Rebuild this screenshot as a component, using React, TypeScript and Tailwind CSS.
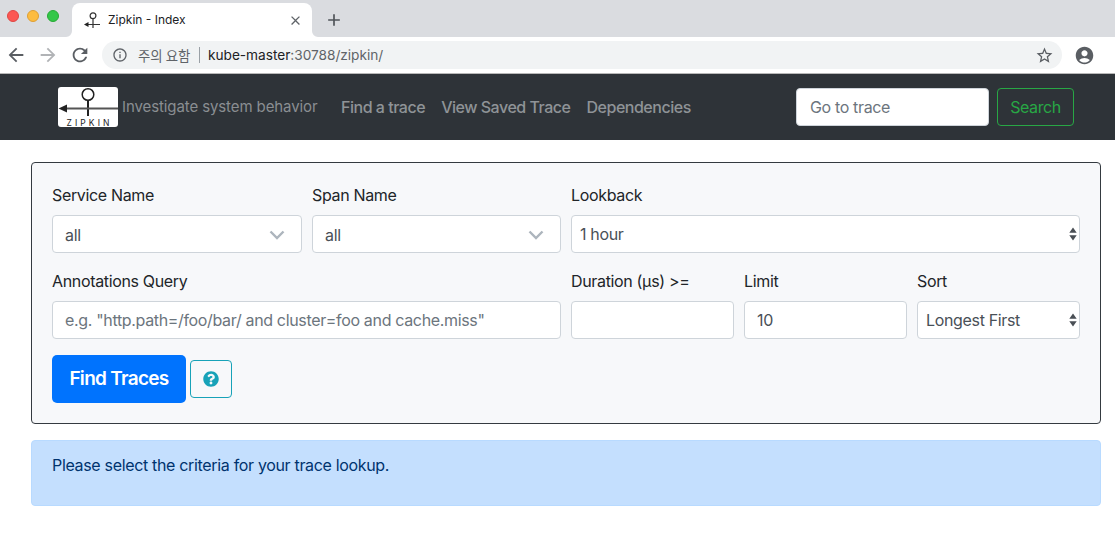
import { FaQuestionCircle } from 'react-icons/fa'
import { MdAccountCircle, MdArrowBack, MdArrowForward, MdClose, MdInfoOutline, MdRefresh, MdStarBorder, MdAdd } from 'react-icons/md'

const labelCls = 'block h-[24px] text-[16px] leading-[24px] text-[#212529] mb-[8px]'
const inputCls =
  'block w-full h-[38px] rounded-[4px] border border-[#ced4da] bg-white px-[12px] text-[16px] tracking-[-0.34px] text-[#495057] outline-none placeholder:text-[#6c757d]'

function Pin({ small }: { small?: boolean }) {
  if (small) {
    return (
      <svg width="17" height="17" viewBox="0 0 17 17" className="shrink-0">
        <circle cx="10" cy="3.8" r="2.9" fill="none" stroke="#333" strokeWidth="1.2" />
        <path d="M10 6.7V16M4 12.5h13" stroke="#333" strokeWidth="1.2" />
        <path d="M1 12.5l4.5-2.6v5.2z" fill="#222" />
      </svg>
    )
  }
  return (
    <svg width="60" height="40" viewBox="0 0 60 40" className="shrink-0 rounded-[3px] bg-white">
      <circle cx="30" cy="7.5" r="5.8" fill="none" stroke="#222" strokeWidth="1.5" />
      <path d="M30 13v16" stroke="#222" strokeWidth="2" />
      <path d="M6 21.5h54" stroke="#555" strokeWidth="2" />
      <path d="M0.5 21.5l8.5-4v8z" fill="#222" />
      <text x="31.5" y="38.5" textAnchor="middle" fontSize="8.5" letterSpacing="3.1" fill="#222" fontFamily="Inter, sans-serif">
        ZIPKIN
      </text>
    </svg>
  )
}

function Chevron() {
  return (
    <svg width="16" height="10" viewBox="0 0 16 10" className="pointer-events-none absolute right-[16px] top-[14px]">
      <path d="M1.5 1.5L8 8l6.5-6.5" fill="none" stroke="#adb5bd" strokeWidth="2.4" />
    </svg>
  )
}

function UpDown() {
  return (
    <svg width="8" height="14" viewBox="0 0 8 14" className="pointer-events-none absolute right-[3px] top-[12px]">
      <path d="M4 0.5L7.7 5.7H0.3zM4 13.5L0.3 8.3h7.4z" fill="#4a4f55" />
    </svg>
  )
}

function ChooseBox({ value }: { value: string }) {
  return (
    <div className="relative h-[38px] rounded-[4px] border border-[#ced4da] bg-white pl-[12px] text-[16px] leading-[38px] text-[#495057]">
      {value}
      <Chevron />
    </div>
  )
}

function NativeSelect({ options }: { options: string[] }) {
  return (
    <div className="relative">
      <select className="block w-full h-[38px] appearance-none rounded-[4px] border border-[#ced4da] bg-white pl-[8px] pr-[16px] text-[16px] tracking-[-0.34px] text-[#495057] outline-none">
        {options.map(o => (
          <option key={o}>{o}</option>
        ))}
      </select>
      <UpDown />
    </div>
  )
}

export default function App() {
  return (
    <div className="h-[544px] w-[1115px] overflow-hidden bg-white font-['Inter','Liberation_Sans',sans-serif]">
      {/* browser tab strip */}
      <div className="flex h-[37px] items-end bg-[#dadce0]">
        <div className="flex w-[72px] items-center gap-[8px] self-center pb-[5px] pl-[7px]">
          <span className="h-[12px] w-[12px] rounded-full bg-[#fc5753] border border-[#df4744]" />
          <span className="h-[12px] w-[12px] rounded-full bg-[#fdbc40] border border-[#de9f34]" />
          <span className="h-[12px] w-[12px] rounded-full bg-[#33c748] border border-[#27aa35]" />
        </div>
        <div className="relative flex h-[34px] w-[240px] items-center rounded-t-[8px] bg-white pl-[11px] pr-[9px]">
          <svg width="6" height="6" viewBox="0 0 6 6" className="absolute bottom-0 left-[-6px]">
            <path d="M6 0v6H0a6 6 0 0 0 6-6z" fill="#fff" />
          </svg>
          <svg width="6" height="6" viewBox="0 0 6 6" className="absolute bottom-0 right-[-6px]">
            <path d="M0 0v6h6a6 6 0 0 1-6-6z" fill="#fff" />
          </svg>
          <Pin small />
          <span className="ml-[8px] flex-1 text-[12px] text-[#202124]">Zipkin - Index</span>
          <MdClose className="text-[#5f6368]" size={15} />
        </div>
        <MdAdd className="mb-[7px] ml-[12px] text-[#4f5358]" size={20} />
      </div>
      {/* toolbar */}
      <div className="flex h-[37px] items-center border-b border-[#b8b8b8] bg-white">
        <MdArrowBack className="ml-[5px] text-[#5a5e63]" size={22} />
        <MdArrowForward className="ml-[10px] text-[#b1b3b6]" size={22} />
        <MdRefresh className="ml-[10px] text-[#5a5e63]" size={22} />
        <div className="ml-[11px] flex h-[28px] w-[960px] items-center rounded-full bg-[#f1f3f4] pl-[10px] pr-[8px]">
          <MdInfoOutline className="text-[#5f6368]" size={16} />
          <span className="ml-[10px] w-[52px] whitespace-nowrap text-[13.4px] text-[#5f6368] font-['Noto_Sans_CJK_KR',sans-serif]">주의 요함</span>
          <span className="ml-[9px] h-[16px] w-px bg-[#9aa0a6]" />
          <span className="ml-[8px] flex-1 text-[13.7px] tracking-[-0.03px] text-[#202124]">
            kube-master<span className="text-[#5f6368]">:30788/zipkin/</span>
          </span>
          <MdStarBorder className="text-[#5a5e63]" size={19} />
        </div>
        <MdAccountCircle className="ml-[12px] text-[#5a5e63]" size={21} />
      </div>
      {/* navbar */}
      <nav className="flex h-[66px] items-center bg-[#2e3338] pl-[58px] pr-[41px] text-[16px]">
        <Pin />
        <span className="ml-[4px] w-[195px] whitespace-nowrap text-[15px] tracking-[-0.1px] text-[#8a8e92]">Investigate system behavior</span>
        <div className="ml-[24px] flex gap-[16px] font-medium tracking-[-0.48px] text-[#8f9397]">
          <a className="whitespace-nowrap">Find a trace</a>
          <a className="whitespace-nowrap">View Saved Trace</a>
          <a className="whitespace-nowrap">Dependencies</a>
        </div>
        <div className="ml-auto flex gap-[8px]">
          <input
            className="h-[38px] w-[193px] rounded-[4px] border border-[#ced4da] bg-white px-[13px] text-[16px] tracking-[-0.35px] text-[#495057] outline-none placeholder:text-[#6c757d]"
            placeholder="Go to trace"
          />
          <button className="h-[38px] w-[77px] rounded-[4px] border border-[#28a745] text-[16px] tracking-[-0.4px] text-[#28a745]">Search</button>
        </div>
      </nav>
      <main className="px-[31px] pr-[14px] pt-[22px]">
        {/* search form */}
        <div className="h-[262px] rounded-[4px] border border-[#343a40] bg-[#f7f8fa] px-[20px] pt-[20px] tracking-[-0.34px]">
          <div className="grid grid-cols-[250px_249px_509px] gap-x-[10px]">
            <div>
              <label className={labelCls}>Service Name</label>
              <ChooseBox value="all" />
            </div>
            <div>
              <label className={labelCls}>Span Name</label>
              <ChooseBox value="all" />
            </div>
            <div>
              <label className={labelCls}>Lookback</label>
              <NativeSelect options={['1 hour', '2 hours', '6 hours', '1 day']} />
            </div>
          </div>
          <div className="mt-[16px] grid grid-cols-[509px_163px_163px_163px] gap-x-[10px]">
            <div>
              <label className={labelCls}>Annotations Query</label>
              <input className={inputCls} placeholder={'e.g. "http.path=/foo/bar/ and cluster=foo and cache.miss"'} />
            </div>
            <div>
              <label className={labelCls}>Duration (μs) &gt;=</label>
              <input className={inputCls} />
            </div>
            <div>
              <label className={labelCls}>Limit</label>
              <input className={inputCls} defaultValue="10" />
            </div>
            <div>
              <label className={labelCls}>Sort</label>
              <NativeSelect options={['Longest First', 'Shortest First', 'Newest First', 'Oldest First']} />
            </div>
          </div>
          <div className="mt-[16px] flex items-center gap-[4px]">
            <button className="h-[48px] w-[134px] rounded-[5px] bg-[#0073fe] pt-[1px] text-[19px] font-semibold tracking-[-0.7px] text-white">Find Traces</button>
            <button className="flex h-[38px] w-[42px] items-center justify-center rounded-[4px] border border-[#17a2b8] text-[#17a2b8]">
              <FaQuestionCircle size={16} />
            </button>
          </div>
        </div>
        {/* info alert */}
        <div className="mt-[16px] h-[66px] rounded-[4px] border border-[#b8daff] bg-[#c4dffe] px-[20px] pt-[12px] text-[16px] leading-[24px] tracking-[-0.33px] text-[#00336e]">
          Please select the criteria for your trace lookup.
        </div>
      </main>
    </div>
  )
}
